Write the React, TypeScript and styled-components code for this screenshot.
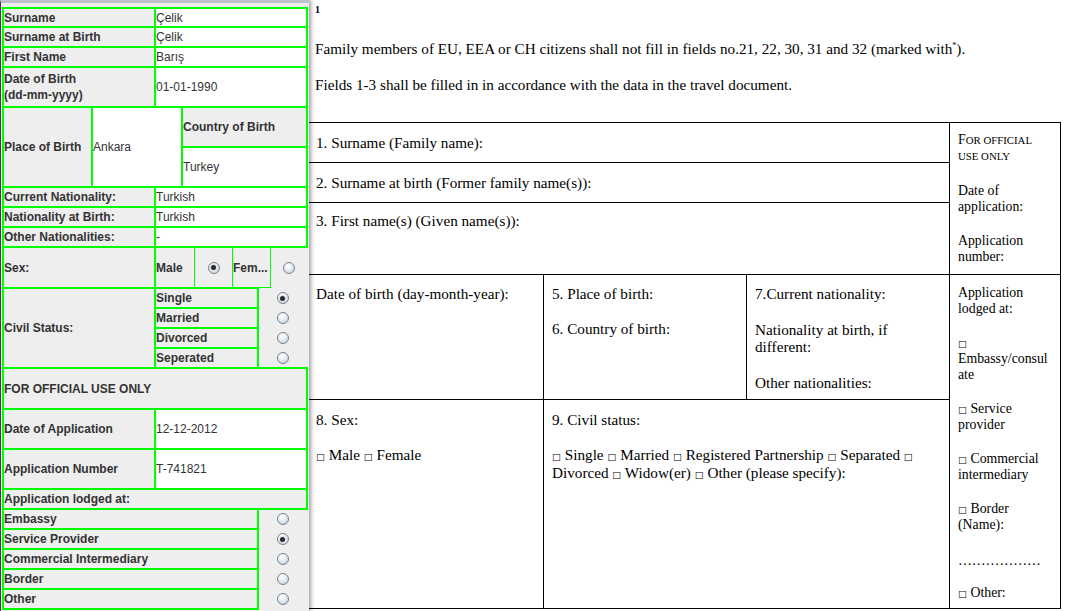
import React from 'react';
import styled, { createGlobalStyle } from 'styled-components';

const Global = createGlobalStyle`
  html, body { margin: 0; padding: 0; background: #ffffff; }
  body { width: 1065px; height: 611px; overflow: hidden; }
`;

const Stage = styled.div`
  position: relative;
  width: 1065px;
  height: 611px;
  overflow: hidden;
  background: #ffffff;
`;

/* ---------- document (background) ---------- */

const Doc = styled.div`
  padding: 2px 0 0 307px;
  font-family: "Liberation Serif", "Times New Roman", serif;
  font-size: 15.2px;
  color: #000;
`;

const Footnote = styled.div`
  padding-left: 8px;
  height: 16px;
  line-height: 16px;
  font-size: 10px;
  font-weight: bold;
`;

const Para = styled.p<{ $gap: number }>`
  margin: ${p => p.$gap}px 0 0;
  padding-left: 8px;
  line-height: 17px;
  white-space: nowrap;
`;

const Sup = styled.sup`
  font-size: 8px;
  line-height: 0;
  vertical-align: 6px;
`;

const Table = styled.div`
  margin-top: 29px;
  display: grid;
  grid-template-columns: 236px 203px 203px 111px;
  grid-template-rows: 40px 40px 72px 125px 209px;
  width: max-content;
  border-top: 1px solid #000;
  border-left: 1px solid #000;
`;

const Cell = styled.div<{ $col: string; $row: string; $pt: number; $small?: boolean }>`
  grid-column: ${p => p.$col};
  grid-row: ${p => p.$row};
  box-sizing: border-box;
  border-right: 1px solid #000;
  border-bottom: 1px solid #000;
  padding: ${p => p.$pt}px ${p => (p.$small ? 9 : 8)}px 0 8px;
  font-size: ${p => (p.$small ? '13.8px' : '15.2px')};
  line-height: ${p => (p.$small ? '16px' : '17px')};
  overflow-wrap: anywhere;
`;

const CellP = styled.p<{ $gap?: number; $lh?: number }>`
  margin: ${p => p.$gap ?? 0}px 0 0;
  ${p => (p.$lh ? `line-height: ${p.$lh}px;` : '')}
`;

const CapSmall = styled.span`
  font-size: 10.8px;
`;

const Tick = styled.span`
  font-family: "DejaVu Sans", sans-serif;
  font-size: 9.5px;
  line-height: 0;
`;

/* ---------- floating Swing window ---------- */

const Window = styled.div`
  position: absolute;
  left: 0;
  top: 0;
  width: 309px;
  height: 611px;
  box-sizing: border-box;
  background: #eeeeee;
  border-top: 3px solid #bcc1ca;
  border-left: 1px solid #3d3d3d;
  padding: 5px 0 0 2px;
  box-shadow: 2px 0 4px rgba(0, 0, 0, 0.38);
  font-family: "Liberation Sans", Arial, sans-serif;
  font-size: 12px;
  color: #333333;
`;

const Form = styled.div`
  width: 304px;
  display: flex;
  flex-direction: column;
`;

const Row = styled.div<{ $cols: string; $rows: string }>`
  display: grid;
  grid-template-columns: ${p => p.$cols};
  grid-template-rows: ${p => p.$rows};
`;

const Box = styled.div<{ $white?: boolean; $plain?: boolean; $span?: string }>`
  margin: -1px;
  border: 2px solid #00ff00;
  background: ${p => (p.$white ? '#ffffff' : 'transparent')};
  font-weight: ${p => (p.$plain ? 'normal' : 'bold')};
  display: flex;
  align-items: center;
  line-height: 16px;
  overflow: hidden;
  white-space: nowrap;
  ${p => (p.$span ? `grid-row: ${p.$span};` : '')}
`;

const ThinBox = styled.div`
  box-sizing: border-box;
  border: 1px solid #00ff00;
  font-weight: bold;
  display: flex;
  align-items: center;
  white-space: nowrap;
  overflow: hidden;
`;

const RadioCell = styled.div`
  display: flex;
  align-items: center;
  justify-content: center;
`;

const Radio = styled.span<{ $on?: boolean }>`
  box-sizing: border-box;
  width: 12px;
  height: 12px;
  border-radius: 50%;
  border: 1px solid #76838f;
  background: radial-gradient(circle at 38% 30%, #ffffff 0%, #eef2f6 35%, #bcc7d3 100%);
  display: grid;
  place-items: center;
  &::after {
    content: '';
    display: ${p => (p.$on ? 'block' : 'none')};
    width: 5px;
    height: 5px;
    border-radius: 50%;
    background: #2b2b2b;
    box-shadow: 0 0 0 1px #dde2e8;
  }
`;

const simpleRows: [string, string][] = [
  ['Surname', 'Çelik'],
  ['Surname at Birth', 'Çelik'],
  ['First Name', 'Barış'],
];

const natRows: [string, string][] = [
  ['Current Nationality:', 'Turkish'],
  ['Nationality at Birth:', 'Turkish'],
  ['Other Nationalities:', '-'],
];

const civil = ['Single', 'Married', 'Divorced', 'Seperated'];
const lodged = ['Embassy', 'Service Provider', 'Commercial Intermediary', 'Border', 'Other'];

function SwingForm() {
  return (
    <Window>
      <Form>
        {simpleRows.map(([l, v], i) => (
          <Row key={l} $cols="152px 152px" $rows={i === 0 ? '19px' : '20px'}>
            <Box>{l}</Box>
            <Box $white $plain>{v}</Box>
          </Row>
        ))}
        <Row $cols="152px 152px" $rows="40px">
          <Box>Date of Birth<br />(dd-mm-yyyy)</Box>
          <Box $white $plain>01-01-1990</Box>
        </Row>
        <Row $cols="89px 90px 125px" $rows="40px 40px">
          <Box $span="1 / 3">Place of Birth</Box>
          <Box $span="1 / 3" $white $plain>Ankara</Box>
          <Box>Country of Birth</Box>
          <Box $white $plain>Turkey</Box>
        </Row>
        {natRows.map(([l, v]) => (
          <Row key={l} $cols="152px 152px" $rows="20px">
            <Box>{l}</Box>
            <Box $white $plain>{v}</Box>
          </Row>
        ))}
        <Row $cols="152px 40px 37px 39px 36px" $rows="41px">
          <Box>Sex:</Box>
          <ThinBox>Male</ThinBox>
          <RadioCell><Radio $on /></RadioCell>
          <ThinBox>Fem...</ThinBox>
          <RadioCell><Radio /></RadioCell>
        </Row>
        <Row $cols="152px 103px 49px" $rows="repeat(4, 20px)">
          <Box $span="1 / 5">Civil Status:</Box>
          {civil.map((c, i) => (
            <React.Fragment key={c}>
              <Box>{c}</Box>
              <RadioCell><Radio $on={i === 0} /></RadioCell>
            </React.Fragment>
          ))}
        </Row>
        <Row $cols="304px" $rows="41px">
          <Box>FOR OFFICIAL USE ONLY</Box>
        </Row>
        <Row $cols="152px 152px" $rows="40px">
          <Box>Date of Application</Box>
          <Box $white $plain>12-12-2012</Box>
        </Row>
        <Row $cols="152px 152px" $rows="40px">
          <Box>Application Number</Box>
          <Box $white $plain>T-741821</Box>
        </Row>
        <Row $cols="304px" $rows="20px">
          <Box>Application lodged at:</Box>
        </Row>
        <Row $cols="255px 49px" $rows="repeat(5, 20px)">
          {lodged.map((c, i) => (
            <React.Fragment key={c}>
              <Box>{c}</Box>
              <RadioCell><Radio $on={i === 1} /></RadioCell>
            </React.Fragment>
          ))}
        </Row>
      </Form>
    </Window>
  );
}

function Document() {
  return (
    <Doc>
      <Footnote>1</Footnote>
      <Para $gap={22}>
        Family members of EU, EEA or CH citizens shall not fill in fields no.21, 22, 30, 31 and 32 (marked with<Sup>*</Sup>).
      </Para>
      <Para $gap={19}>Fields 1-3 shall be filled in in accordance with the data in the travel document.</Para>
      <Table>
        <Cell $col="1 / 4" $row="1" $pt={11}>1. Surname (Family name):</Cell>
        <Cell $col="1 / 4" $row="2" $pt={11}>2. Surname at birth (Former family name(s)):</Cell>
        <Cell $col="1 / 4" $row="3" $pt={9}>3. First name(s) (Given name(s)):</Cell>
        <Cell $col="4" $row="1 / 4" $pt={9} $small>
          <CellP>F<CapSmall>OR OFFICIAL USE ONLY</CapSmall></CellP>
          <CellP $gap={19}>Date of application:</CellP>
          <CellP $gap={18}>Application number:</CellP>
        </Cell>
        <Cell $col="1" $row="4" $pt={10}>Date of birth (day-month-year):</Cell>
        <Cell $col="2" $row="4" $pt={10}>
          <CellP>5. Place of birth:</CellP>
          <CellP $gap={18}>6. Country of birth:</CellP>
        </Cell>
        <Cell $col="3" $row="4" $pt={10}>
          <CellP>7.Current nationality:</CellP>
          <CellP $gap={19}>Nationality at birth, if different:</CellP>
          <CellP $gap={19}>Other nationalities:</CellP>
        </Cell>
        <Cell $col="4" $row="4 / 6" $pt={10} $small>
          <CellP>Application lodged at:</CellP>
          <CellP $gap={18}><Tick>□</Tick> Embassy/consulate</CellP>
          <CellP $gap={18}><Tick>□</Tick> Service provider</CellP>
          <CellP $gap={18}><Tick>□</Tick> Commercial intermediary</CellP>
          <CellP $gap={18}><Tick>□</Tick> Border (Name):</CellP>
          <CellP $gap={20}>………………</CellP>
          <CellP $gap={16}><Tick>□</Tick> Other:</CellP>
        </Cell>
        <Cell $col="1" $row="5" $pt={11}>
          <CellP>8. Sex:</CellP>
          <CellP $gap={18}><Tick>□</Tick> Male <Tick>□</Tick> Female</CellP>
        </Cell>
        <Cell $col="2 / 4" $row="5" $pt={11}>
          <CellP>9. Civil status:</CellP>
          <CellP $gap={18} $lh={18}>
            <Tick>□</Tick> Single <Tick>□</Tick> Married <Tick>□</Tick> Registered Partnership <Tick>□</Tick> Separated <Tick>□</Tick> Divorced <Tick>□</Tick> Widow(er) <Tick>□</Tick> Other (please specify):
          </CellP>
        </Cell>
      </Table>
    </Doc>
  );
}

export default function App() {
  return (
    <Stage>
      <Global />
      <Document />
      <SwingForm />
    </Stage>
  );
}
